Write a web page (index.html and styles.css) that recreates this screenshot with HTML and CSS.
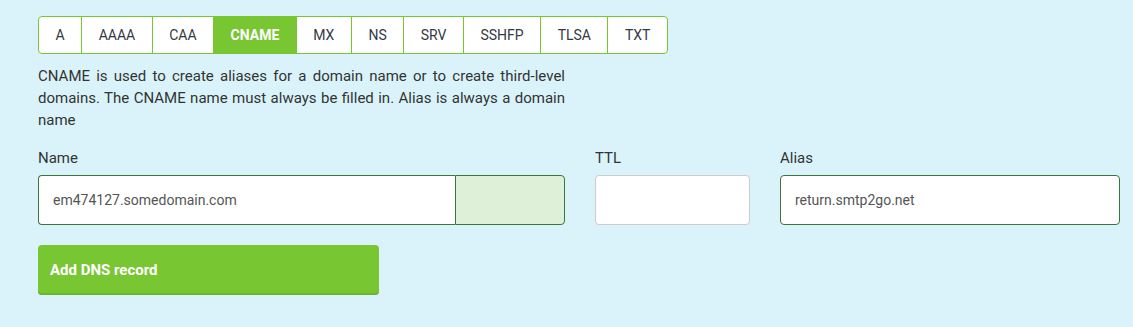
FILE: index.html
```html
<!DOCTYPE html>
<html>
<head>
<meta charset="utf-8">
<link rel="stylesheet" href="styles.css">
</head>
<body>
<div class="page">
  <div class="tabs">
    <span class="tab">A</span>
    <span class="tab">AAAA</span>
    <span class="tab">CAA</span>
    <span class="tab active">CNAME</span>
    <span class="tab">MX</span>
    <span class="tab">NS</span>
    <span class="tab">SRV</span>
    <span class="tab">SSHFP</span>
    <span class="tab">TLSA</span>
    <span class="tab">TXT</span>
  </div>
  <p class="desc">CNAME is used to create aliases for a domain name or to create third-level domains. The CNAME name must always be filled in. Alias is always a domain name</p>
  <div class="fields">
    <div class="field">
      <label class="label">Name</label>
      <div class="group success">
        <input class="input" type="text" value="em474127.somedomain.com">
        <span class="addon"></span>
      </div>
    </div>
    <div class="field">
      <label class="label">TTL</label>
      <input class="input plain" type="text" value="">
    </div>
    <div class="field">
      <label class="label">Alias</label>
      <input class="input success-input" type="text" value="return.smtp2go.net">
    </div>
  </div>
  <button class="btn">Add DNS record</button>
</div>
</body>
</html>
```
FILE: styles.css
```css
html, body {
  margin: 0;
  padding: 0;
  background: #daf3fa;
  font-family: Roboto, "Liberation Sans", sans-serif;
  color: #333;
  overflow: hidden;
}
.page {
  padding: 16px 13px 0 38px;
  width: 1082px;
}
.tabs {
  display: inline-flex;
  border: 1px solid #78c632;
  border-radius: 4px;
  background: #fff;
  overflow: hidden;
  height: 36px;
}
.tab {
  display: flex;
  align-items: center;
  padding: 0 16.5px;
  font-size: 14px;
  color: #333a44;
  border-left: 1px solid #78c632;
}
.tab:first-child {
  border-left: none;
}
.tab.active {
  background: #78c632;
  color: #fff;
  font-weight: bold;
}
.desc {
  width: 527px;
  margin: 11px 0 0 0;
  font-size: 15px;
  line-height: 22px;
  text-align: justify;
  color: #333;
}
.fields {
  display: grid;
  grid-template-columns: minmax(0, 527fr) minmax(0, 155fr) minmax(0, 340fr);
  column-gap: 30px;
  margin-top: 17px;
}
.field {
  display: flex;
  flex-direction: column;
}
.label {
  font-size: 15px;
  color: #333;
  line-height: 20px;
  margin-bottom: 7px;
}
.input {
  box-sizing: border-box;
  height: 50px;
  border: 1px solid #3c763d;
  border-radius: 4px;
  background: #fff;
  padding: 0 14px;
  font-family: Roboto, "Liberation Sans", sans-serif;
  font-size: 14px;
  color: #555;
  outline: none;
  width: 100%;
}
.input.plain {
  border-color: #cccccc;
}
.group {
  display: flex;
  height: 50px;
}
.group .input {
  flex: 1;
  border-radius: 4px 0 0 4px;
  border-right: none;
  min-width: 0;
}
.addon {
  box-sizing: border-box;
  width: 110px;
  border: 1px solid #3c763d;
  border-radius: 0 4px 4px 0;
  background: #dff0d8;
}
.btn {
  display: block;
  margin-top: 20px;
  box-sizing: border-box;
  width: 341px;
  height: 50px;
  border: none;
  box-shadow: inset 0 -2px 0 #6cb52c;
  border-radius: 4px;
  background: #78c632;
  color: #fff;
  font-family: Roboto, "Liberation Sans", sans-serif;
  font-size: 15px;
  font-weight: bold;
  text-align: left;
  padding: 0 12px;
}
```
